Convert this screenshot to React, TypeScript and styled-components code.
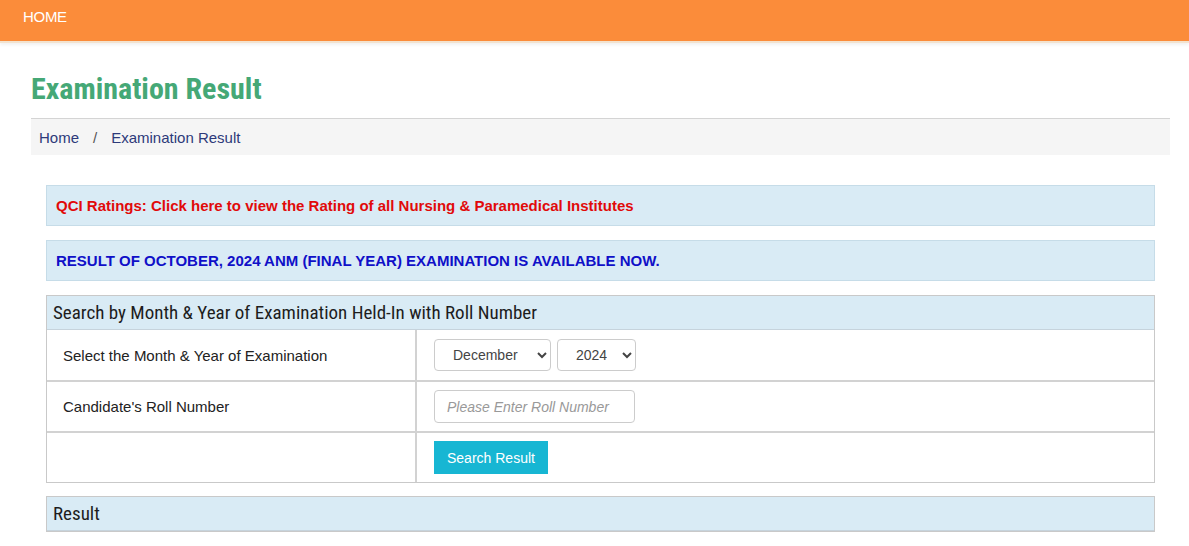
import React from "react";
import styled, { createGlobalStyle } from "styled-components";

const Global = createGlobalStyle`
  html, body { margin: 0; padding: 0; background: #fff; }
  body { font-family: "Liberation Sans", Arial, sans-serif; color: #222; }
  * { box-sizing: border-box; }
`;

const TopBar = styled.header`
  height: 43px;
  background: #fb8c3a;
  border-bottom: 2px solid #f3e3cf;
  display: flex;
  align-items: flex-start;
  padding: 8px 23px 0;
  box-shadow: 0 2px 3px rgba(0,0,0,0.06);
`;

const NavLink = styled.a`
  color: #fff;
  font-family: "Liberation Sans", Arial, sans-serif;
  font-size: 15px;
  text-decoration: none;
  letter-spacing: -0.3px;
`;

const Container = styled.main`
  padding: 0 19px 0 31px;
`;

const Title = styled.h1`
  margin: 30px 0 0;
  height: 45px;
  font-family: "Roboto Condensed", "Liberation Sans Narrow", Roboto, sans-serif;
  font-weight: 700;
  font-size: 30px;
  line-height: 32px;
  color: #45a876;
`;

const Breadcrumb = styled.nav`
  height: 37px;
  background: #f5f5f5;
  border-top: 1px solid #d4d4d4;
  display: flex;
  align-items: center;
  padding: 0 8px;
  font-size: 15px;
  color: #2d3a7a;
`;

const Sep = styled.span`
  padding: 0 14px;
  color: #555;
`;

const Body = styled.section`
  padding: 30px 15px 0;
  display: flex;
  flex-direction: column;
`;

const Alert = styled.div<{ $color: string }>`
  height: 41px;
  background: #d9ebf5;
  border: 1px solid #c6dce8;
  display: flex;
  align-items: center;
  padding: 0 9px;
  font-weight: 700;
  font-size: 15px;
  color: ${(p) => p.$color};
  margin-bottom: 14px;
`;

const Panel = styled.div`
  border: 1px solid #c9c9c9;
  margin-bottom: 13px;
`;

const PanelHead = styled.div`
  height: 34px;
  background: #d9ebf5;
  border-bottom: 1px solid #c6d3dc;
  display: flex;
  align-items: center;
  padding: 0 6px;
  font-family: "Roboto Condensed", "Liberation Sans Narrow", Roboto, sans-serif;
  font-size: 19px;
  color: #1d1d1d;
`;

const Row = styled.div`
  display: grid;
  grid-template-columns: 370px 1fr;
  height: 51px;
  border-top: 2px solid #d2d2d2;
  &:first-of-type { height: 50px; border-top: none; }
`;

const LabelCell = styled.div`
  border-right: 2px solid #d2d2d2;
  display: flex;
  align-items: center;
  padding: 0 16px;
  font-size: 15px;
  color: #222;
`;

const FieldCell = styled.div`
  display: flex;
  align-items: center;
  gap: 6px;
  padding: 0 17px;
`;

const Select = styled.select<{ $w: number }>`
  width: ${(p) => p.$w}px;
  height: 32px;
  border: 1px solid #ccc;
  border-radius: 4px;
  background: #fff;
  font-family: "Liberation Sans", Arial, sans-serif;
  font-size: 14px;
  color: #444;
  padding: 0 12px 0 14px;
`;

const Input = styled.input`
  width: 201px;
  height: 33px;
  border: 1px solid #ccc;
  border-radius: 4px;
  padding: 0 12px;
  font-family: "Liberation Sans", Arial, sans-serif;
  font-size: 14px;
  &::placeholder { color: #999; font-style: italic; }
`;

const Button = styled.button`
  height: 33px;
  padding: 0 13px;
  background: #17b6d3;
  border: none;
  color: #fff;
  font-family: "Liberation Sans", Arial, sans-serif;
  font-size: 14px;
`;

const Rows = styled.div`
  display: flex;
  flex-direction: column;
`;

export default function App() {
  return (
    <>
      <Global />
      <TopBar>
        <NavLink href="#">HOME</NavLink>
      </TopBar>
      <Container>
        <Title>Examination Result</Title>
        <Breadcrumb>
          <span>Home</span>
          <Sep>/</Sep>
          <span>Examination Result</span>
        </Breadcrumb>
        <Body>
          <Alert $color="#e10a0a">QCI Ratings: Click here to view the Rating of all Nursing &amp; Paramedical Institutes</Alert>
          <Alert $color="#1010c8">RESULT OF OCTOBER, 2024 ANM (FINAL YEAR) EXAMINATION IS AVAILABLE NOW.</Alert>
          <Panel>
            <PanelHead>Search by Month &amp; Year of Examination Held-In with Roll Number</PanelHead>
            <Rows>
              <Row>
                <LabelCell>Select the Month &amp; Year of Examination</LabelCell>
                <FieldCell>
                  <Select $w={117} defaultValue="December">
                    <option>January</option>
                    <option>December</option>
                  </Select>
                  <Select $w={79} defaultValue="2024">
                    <option>2024</option>
                    <option>2023</option>
                  </Select>
                </FieldCell>
              </Row>
              <Row>
                <LabelCell>Candidate's Roll Number</LabelCell>
                <FieldCell>
                  <Input placeholder="Please Enter Roll Number" />
                </FieldCell>
              </Row>
              <Row>
                <LabelCell />
                <FieldCell>
                  <Button>Search Result</Button>
                </FieldCell>
              </Row>
            </Rows>
          </Panel>
          <Panel>
            <PanelHead>Result</PanelHead>
          </Panel>
        </Body>
      </Container>
    </>
  );
}
